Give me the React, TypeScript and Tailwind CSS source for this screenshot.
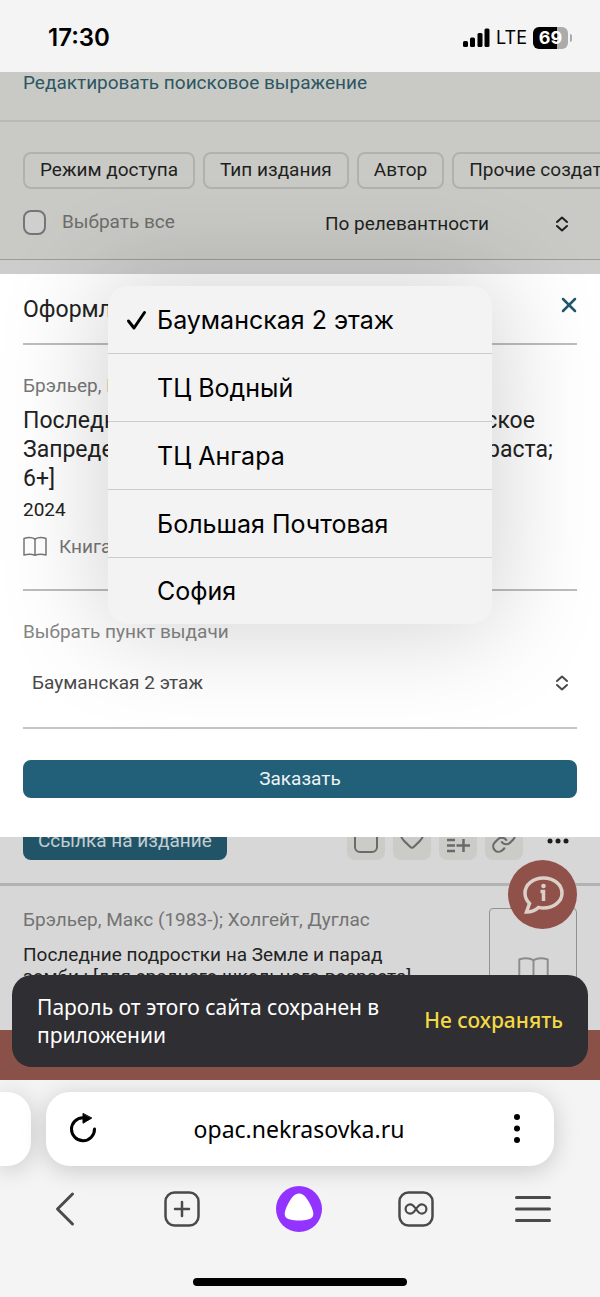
import React, { useState } from 'react';
import { Heart, Link, X } from 'lucide-react';

const PAGE_FONT = "font-['Roboto',sans-serif]";
const BROWSER_FONT = "font-['Noto_Sans',sans-serif]";
const SYSTEM_FONT = "font-['Inter',sans-serif]";

const FILTERS = ['Режим доступа', 'Тип издания', 'Автор', 'Прочие создатели'];

const PICKUP_POINTS = [
  'Бауманская 2 этаж',
  'ТЦ Водный',
  'ТЦ Ангара',
  'Большая Почтовая',
  'София',
];

const UpDown: React.FC = () => (
  <svg className="pointer-events-none absolute top-1/2 right-2 -translate-y-1/2" width="14" height="16" viewBox="0 0 14 16" fill="none" stroke="currentColor" strokeWidth="2" strokeLinecap="round" strokeLinejoin="round">
    <path d="M2 6l5-4.500L12 6" />
    <path d="M2 10l5 4.500 5-4.500" />
  </svg>
);

const Book: React.FC<{ size: number }> = ({ size }) => (
  <svg width={size} height={size} viewBox="0 0 24 24" fill="none" stroke="currentColor" strokeWidth="1.500" strokeLinejoin="round">
    <path d="M1 3.500c3.500-1.300 8-1.300 11 .5 3-1.800 7.500-1.800 11-.5v16.500c-3.500-1-8-1-11 .2-3-1.200-7.500-1.200-11-.2z" />
    <path d="M12 4v16.200" />
  </svg>
);

const StatusBar: React.FC = () => (
  <header className={`flex h-[72px] items-center justify-between bg-[#f4f4f4] pr-7 pl-12 text-black ${SYSTEM_FONT}`}>
    <span className="pt-1 text-2xl font-semibold">17:30</span>
    <div className="flex items-center gap-1.5 pt-1">
      <svg width="27" height="20" viewBox="0 0 27 20" fill="currentColor">
        <rect x="0" y="13" width="5" height="6" rx="1.500" />
        <rect x="7" y="9.500" width="5" height="9.500" rx="1.500" />
        <rect x="14.500" y="5" width="5" height="14" rx="1.500" />
        <rect x="21.500" y="0.500" width="5" height="18.500" rx="1.500" />
      </svg>
      <span className="text-lg">LTE</span>
      <div className="flex items-center gap-0.5">
        <div className="flex h-[22px] w-[35px] items-center justify-center rounded-[6px] bg-linear-to-r from-black from-70% to-[#ababab] to-70% text-lg font-bold text-white">
          69
        </div>
        <div className="h-2 w-0.5 rounded-r-full bg-[#ababab]" />
      </div>
    </div>
  </header>
);

const SearchHeader: React.FC = () => (
  <div className="bg-[#c9cac5]">
    <div className="h-[50px] border-b-2 border-[#b9bab5] px-[23px]">
      <a href="#query" className="text-[19px] leading-[22px] text-[#2c5664]">Редактировать поисковое выражение</a>
    </div>
    <div className="flex gap-2 overflow-hidden pt-[30px] pl-[23px]">
      {FILTERS.map(name => (
        <button key={name} className="h-[37px] shrink-0 rounded-lg border-2 border-[#b1b2ad] px-[15px] text-[19px] whitespace-nowrap text-[#1f1f1f]">
          {name}
        </button>
      ))}
    </div>
    <div className="flex h-[71px] items-center justify-between border-b border-[#9b9c9a] px-[23px]">
      <label className="flex items-center gap-4 pb-1 text-[19px] text-[#6d6d6b]">
        <input type="checkbox" className="h-[25px] w-[23px] appearance-none rounded-lg border-2 border-[#757577] bg-[#cfcfcf]" />
        Выбрать все
      </label>
      <div className="relative w-[252px] text-[#1f1f1f]">
        <select aria-label="Сортировка" className="w-full appearance-none bg-transparent text-[19px]">
          <option>По релевантности</option>
        </select>
        <UpDown />
      </div>
    </div>
    <div className="h-[14px] bg-[#cdcdcd]" />
  </div>
);

interface PickupMenuProps {
  value: string;
  onSelect: (point: string) => void;
}

const PickupMenu: React.FC<PickupMenuProps> = ({ value, onSelect }) => (
  <div
    role="listbox"
    className={`absolute inset-x-[18%] top-3 z-20 divide-y divide-[#cccccc] overflow-hidden rounded-[20px] bg-[#f3f3f3] text-black shadow-[0_0_100px_10px_rgba(0,0,0,0.17)] ${SYSTEM_FONT}`}
  >
    {PICKUP_POINTS.map(point => (
      <button
        key={point}
        role="option"
        aria-selected={point === value}
        onClick={() => onSelect(point)}
        className="flex h-[68px] w-full items-center pt-0.5 pl-4 text-left text-[25px] last:h-[66px]"
      >
        <span className="w-[33px]">
          {point === value && (
            <svg width="24" height="24" viewBox="0 0 24 24" fill="none" stroke="currentColor" strokeWidth="3" strokeLinecap="round" strokeLinejoin="round">
              <path d="M4.500 12l5.500 7L20.500 3.500" />
            </svg>
          )}
        </span>
        {point}
      </button>
    ))}
  </div>
);

const OrderDialog: React.FC = () => {
  const [point, setPoint] = useState(PICKUP_POINTS[0]);

  return (
    <section role="dialog" aria-label="Оформление заказа" className="relative z-10 bg-white px-[23px] pb-[39px]">
      <div className="flex h-[71px] items-center justify-between border-b-2 border-[#bdbdbd]">
        <h2 className="pt-1 text-[23px] text-[#222]">Оформление заказа</h2>
        <button aria-label="Закрыть" className="-mr-1 pb-2 text-[#22586b]">
          <X size={24} strokeWidth={2.500} />
        </button>
      </div>

      <div className="border-b-2 border-[#bdbdbd] pt-[29px] pb-[30px]">
        <p className="text-[19px] leading-6 text-[#777]">Брэльер, Макс (1983-); Холгейт, Дуглас</p>
        <h3 className="mt-2 text-[23px] leading-[29px] text-[#222]">
          Последние подростки на Земле и космическое Запределье : [для среднего школьного возраста; 6+]
        </h3>
        <p className="mt-[5px] text-[19px] leading-6 text-[#222]">2024</p>
        <p className="mt-[13px] flex items-center gap-3 text-[19px] leading-6 text-[#777]">
          <Book size={24} />
          Книга
        </p>
      </div>

      <div className="border-b-2 border-[#c4c4c4] py-[29px]">
        <label htmlFor="pickup" className="block text-[19px] leading-6 text-[#868686]">Выбрать пункт выдачи</label>
        <div className="relative mt-6 text-[#4a4a4a]">
          <select
            id="pickup"
            value={point}
            onChange={e => setPoint(e.target.value)}
            className="h-[30px] w-full appearance-none bg-transparent pl-[9px] text-[19px]"
          >
            {PICKUP_POINTS.map(p => <option key={p}>{p}</option>)}
          </select>
          <UpDown />
        </div>
      </div>

      <button className="mt-[31px] h-[38px] w-full rounded-lg bg-[#225f78] text-[19px] text-[#eef3f5]">Заказать</button>

      <PickupMenu value={point} onSelect={setPoint} />
    </section>
  );
};

const ListPlus: React.FC = () => (
  <svg width="26" height="24" viewBox="0 0 26 24" fill="none" stroke="currentColor" strokeWidth="2.500">
    <path d="M2 11h8M2 16.500h8M2 22h8M11.500 16.500h13.500M18.500 10v13" />
  </svg>
);

const TOOLS = [
  { label: 'Выбрать', icon: <span className="h-6 w-6 rounded-md border-2 border-current" /> },
  { label: 'В избранное', icon: <Heart size={26} strokeWidth={2} className="mb-1.5" /> },
  { label: 'Добавить в список', icon: <ListPlus /> },
  { label: 'Скопировать ссылку', icon: <Link size={26} strokeWidth={2} /> },
];

const SearchResults: React.FC = () => (
  <div className="h-[193px] overflow-hidden bg-[#d7d7d7]">
    <div className="-mt-[15px] flex items-center justify-between px-[23px]">
      <a href="#edition" className="flex h-[38px] items-center rounded-lg bg-[#225468] px-[15px] text-[19px] text-[#c3ced2]">Ссылка на издание</a>
      <div className="flex items-center gap-2 text-[#6a6a6a]">
        {TOOLS.map(tool => (
          <button key={tool.label} aria-label={tool.label} className="flex h-[38px] w-[38px] items-center justify-center rounded-lg bg-[#cbcbc8]">
            {tool.icon}
          </button>
        ))}
        <button aria-label="Ещё" className="ml-2 flex h-[38px] w-[38px] items-center justify-center text-[#1c1c1c]">
          <svg width="22" height="6" viewBox="0 0 22 6" fill="currentColor">
            <circle cx="3" cy="3" r="2.500" />
            <circle cx="11" cy="3" r="2.500" />
            <circle cx="19" cy="3" r="2.500" />
          </svg>
        </button>
      </div>
    </div>

    <article className="mt-[23px] flex items-start justify-between border-t-[3px] border-[#b3b3b3] px-[23px] pt-[22px]">
      <div className="max-w-[400px]">
        <p className="text-[19px] leading-6 text-[#737373]">Брэльер, Макс (1983-); Холгейт, Дуглас</p>
        <h3 className="mt-3 text-[19px] leading-[22px] text-[#222]">
          Последние подростки на Земле и парад зомби : [для среднего школьного возраста]
        </h3>
      </div>
      <div className="flex h-[124px] w-[88px] items-center justify-center rounded-sm border border-[#929292] text-[#8c8c8c]">
        <Book size={31} />
      </div>
    </article>
  </div>
);

const Toast: React.FC = () => (
  <div role="status" className={`absolute inset-x-3 bottom-[13px] z-30 flex h-[92px] items-center justify-between gap-6 rounded-[20px] bg-[#2f2e33] px-[25px] ${BROWSER_FONT}`}>
    <p className="max-w-[350px] text-[21px] leading-7 text-white">Пароль от этого сайта сохранен в приложении</p>
    <button className="shrink-0 text-[21px] font-medium text-[#f3d944]">Не сохранять</button>
  </div>
);

const BrowserBar: React.FC = () => (
  <footer className={`flex flex-col items-center overflow-hidden bg-[#f4f4f4] pt-3 pb-[11px] ${BROWSER_FONT}`}>
    <div className="flex w-full gap-[15px] pr-[46px]">
      <div className="h-[74px] w-[31px] shrink-0 rounded-r-3xl bg-white shadow-[0_4px_24px_rgba(0,0,0,0.18)]" />
      <div className="flex h-[74px] flex-1 items-center justify-between rounded-3xl bg-white pr-8 pl-[22px] shadow-[0_4px_24px_rgba(0,0,0,0.18)]">
        <button aria-label="Обновить">
          <svg width="30" height="32" viewBox="0 0 30 32" fill="none" stroke="black" strokeWidth="3" strokeLinecap="round">
            <path d="M15 4.700A11.500 11.500 0 1 0 26.500 16" />
            <path d="M15 .8v9.400L23.500 5.200z" fill="black" strokeWidth="1" strokeLinejoin="round" />
          </svg>
        </button>
        <span className="pr-3 text-[23px] text-black">opac.nekrasovka.ru</span>
        <button aria-label="Меню страницы">
          <svg width="10" height="32" viewBox="0 0 10 32">
            <circle cx="5" cy="4" r="3" />
            <circle cx="5" cy="15.500" r="3" />
            <circle cx="5" cy="27" r="3" />
          </svg>
        </button>
      </div>
    </div>

    <nav className="mt-5 grid w-full grid-cols-5 items-center justify-items-center pr-2 pl-1.5 text-[#4a4a4c]">
      <button aria-label="Назад">
        <svg width="22" height="36" viewBox="0 0 22 36" fill="none" stroke="currentColor" strokeWidth="3" strokeLinecap="round" strokeLinejoin="round">
          <path d="M18.500 3L3.500 18l15 15" />
        </svg>
      </button>
      <button aria-label="Новая вкладка">
        <svg width="36" height="36" viewBox="0 0 36 36" fill="none" stroke="currentColor" strokeWidth="2.500" strokeLinecap="round">
          <rect x="1.500" y="1.500" width="33" height="33" rx="9" />
          <path d="M18 11v14M11 18h14" />
        </svg>
      </button>
      <button aria-label="Алиса">
        <svg width="46" height="46" viewBox="0 0 46 46">
          <circle cx="23" cy="23" r="23" fill="#9333ff" />
          <path d="M23 7.500c-5 0-8.500 5.500-11.500 11.500C9.500 23 8 27 9 30c1.500 3.500 7.500 4.500 14 4.500S35.500 33.500 37 30c1-3-.5-7-2.500-11C31.500 13 28 7.500 23 7.500z" fill="white" />
        </svg>
      </button>
      <button aria-label="Вкладки">
        <svg width="36" height="36" viewBox="0 0 36 36" fill="none" stroke="currentColor" strokeWidth="2.500" strokeLinecap="round">
          <rect x="1.500" y="1.500" width="33" height="33" rx="9" />
          <path d="M15.500 21.300c-1 1-2 1.400-3.200 1.400a4.700 4.700 0 0 1 0-9.400c2.200 0 3.700 1.700 5.700 4.700s3.500 4.700 5.700 4.700a4.700 4.700 0 0 0 0-9.400c-2.200 0-3.700 1.700-5.700 4.700-.8 1.300-1.600 2.400-2.500 3.300z" strokeWidth="2.200" strokeLinejoin="round" />
        </svg>
      </button>
      <button aria-label="Меню">
        <svg width="36" height="28" viewBox="0 0 36 28" fill="none" stroke="currentColor" strokeWidth="3" strokeLinecap="round">
          <path d="M1.500 2.500h33M1.500 14h33M1.500 25.500h33" />
        </svg>
      </button>
    </nav>

    <div className="mt-[46px] h-2 w-[214px] rounded-full bg-black" />
  </footer>
);

const App: React.FC = () => (
  <div className="flex flex-col overflow-hidden bg-[#f4f4f4]">
    <StatusBar />
    <main className={`relative overflow-hidden ${PAGE_FONT}`}>
      <SearchHeader />
      <OrderDialog />
      <SearchResults />
      <div className="h-[50px] bg-[#8a5149]" />

      {/* Help chat */}
      <button aria-label="Помощь" className="absolute right-[23px] bottom-[151px] z-20 flex h-[69px] w-[69px] items-center justify-center rounded-full bg-[#8f5149] text-[#dccfc8]">
        <svg width="44" height="42" viewBox="0 0 44 42" fill="none" stroke="currentColor" strokeWidth="3.500">
          <path d="M22.500 4C12 4 4 10.500 4 19c0 4.500 1.800 7.800 4.500 10.500L5.500 38c5 0 9-1.700 12-4.600 1.600.4 3.300.6 5 .6C33 34 41 27.500 41 19S33 4 22.500 4z" />
          <path d="M19.500 17.500h3V27" />
          <circle cx="22.500" cy="12" r="2.300" fill="currentColor" stroke="none" />
        </svg>
      </button>

      <Toast />
    </main>
    <BrowserBar />
  </div>
);

export default App;
